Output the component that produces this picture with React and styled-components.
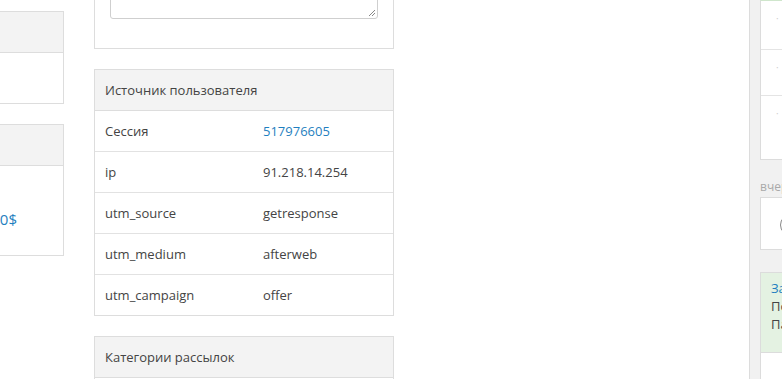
import React from "react";
import styled, { createGlobalStyle } from "styled-components";

const Global = createGlobalStyle`
  *, *::before, *::after {
    box-sizing: border-box;
  }
  html, body {
    margin: 0;
    padding: 0;
    background: #fff;
    font-family: "Open Sans", "Liberation Sans", sans-serif;
    font-size: 13px;
    color: #444;
  }
`;

const Page = styled.div`
  display: flex;
  width: 782px;
  height: 379px;
  overflow: hidden;
`;

const LeftCol = styled.div`
  width: 64px;
  flex: none;
  padding-top: 11px;
  display: flex;
  flex-direction: column;
  align-items: flex-end;
  gap: 20px;
`;

const MidCol = styled.div`
  width: 300px;
  flex: none;
  margin-left: 30px;
  display: flex;
  flex-direction: column;
  gap: 20px;
`;

const Spacer = styled.div`
  flex: 1;
`;

const Sidebar = styled.div`
  width: 33px;
  flex: none;
  background: #f1f1f1;
  border-left: 1px solid #dcdcdc;
  padding-left: 10px;
  display: flex;
  flex-direction: column;
`;

const Panel = styled.div`
  border: 1px solid #dddddd;
  background: #fff;
  width: ${(p) => p.$width || "300px"};
  flex: none;
`;

const PanelHead = styled.div`
  height: 41px;
  background: #f3f3f3;
  border-bottom: 1px solid #dddddd;
  display: flex;
  align-items: center;
  padding: 0 10px;
`;

const PanelBody = styled.div`
  height: ${(p) => p.$h}px;
  display: flex;
  align-items: center;
  justify-content: flex-end;
  padding-right: 46px;
`;

const Money = styled.span`
  color: #1f7fc0;
  font-size: 15px;
  margin-top: 16px;
`;

const NotePanel = styled(Panel)`
  margin-top: -60px;
  height: 109px;
  padding: 15px 15px 30px;
`;

const TextArea = styled.div`
  height: 63px;
  border: 1px solid #cfcfcf;
  border-radius: 3px;
  position: relative;
`;

const Grip = styled.svg`
  position: absolute;
  right: 1px;
  bottom: 1px;
`;

const Row = styled.div`
  display: grid;
  grid-template-columns: 158px 1fr;
  height: 41px;
  align-items: center;
  padding: 0 10px;
  border-bottom: 1px solid #e2e2e2;
  &:last-child {
    border-bottom: none;
    height: 40px;
  }
`;

const Link = styled.a`
  color: #1f7fc0;
  text-decoration: none;
`;

const Card = styled.div`
  width: 200px;
  background: ${(p) => (p.$green ? "#e4f2e2" : "#fff")};
  border: 1px solid #dcdcdc;
  flex: none;
`;

const CardRow = styled.div`
  height: ${(p) => p.$h}px;
  border-bottom: 1px solid #e4e4e4;
  padding: 10px 0 0 15px;
  color: #d0d0d0;
  font-size: 10px;
  &:last-child {
    border-bottom: none;
  }
`;

const DayLabel = styled.div`
  color: #a9a9a9;
  font-size: 12px;
  line-height: 16px;
  margin: 19px 0 2px;
  white-space: nowrap;
`;

const Notice = styled.div`
  padding: 6px 0 0 10px;
  height: 79px;
  line-height: 18px;
  font-size: 13px;
  white-space: nowrap;
`;

const NoticeTitle = styled.div`
  color: #1f7fc0;
`;

const Avatar = styled.div`
  width: 22px;
  height: 22px;
  border: 1px solid #888;
  border-radius: 50%;
  margin: 6px 0 0 4px;
`;

const rows = [
  ["Сессия", <Link key="s">517976605</Link>],
  ["ip", "91.218.14.254"],
  ["utm_source", "getresponse"],
  ["utm_medium", "afterweb"],
  ["utm_campaign", "offer"],
];

export default function App() {
  return (
    <Page>
      <Global />
      <LeftCol>
        <Panel $width="200px">
          <PanelHead />
          <PanelBody $h={50} />
        </Panel>
        <Panel $width="200px">
          <PanelHead />
          <PanelBody $h={89}>
            <Money>100$</Money>
          </PanelBody>
        </Panel>
      </LeftCol>

      <MidCol>
        <NotePanel>
          <TextArea>
            <Grip width="9" height="9" viewBox="0 0 9 9">
              <path d="M8 2 L2 8 M8 5 L5 8" stroke="#888" strokeWidth="1" />
            </Grip>
          </TextArea>
        </NotePanel>
        <Panel>
          <PanelHead>Источник пользователя</PanelHead>
          {rows.map(([k, v]) => (
            <Row key={k}>
              <span>{k}</span>
              <span>{v}</span>
            </Row>
          ))}
        </Panel>
        <Panel>
          <PanelHead>Категории рассылок</PanelHead>
          <Row />
        </Panel>
      </MidCol>

      <Spacer />

      <Sidebar>
        <Card style={{ borderTopColor: "#cfe6cc" }}>
          <CardRow $h={49}>·</CardRow>
          <CardRow $h={46}>·</CardRow>
          <CardRow $h={63}>·</CardRow>
        </Card>
        <DayLabel>вчера</DayLabel>
        <Card>
          <CardRow $h={51}>
            <Avatar />
          </CardRow>
        </Card>
        <Card $green style={{ marginTop: "22px" }}>
          <Notice>
            <NoticeTitle>Заявка</NoticeTitle>
            <div>Поступил</div>
            <div>Пакет</div>
          </Notice>
        </Card>
        <Card style={{ borderTop: "none", height: "40px" }} />
      </Sidebar>
    </Page>
  );
}
